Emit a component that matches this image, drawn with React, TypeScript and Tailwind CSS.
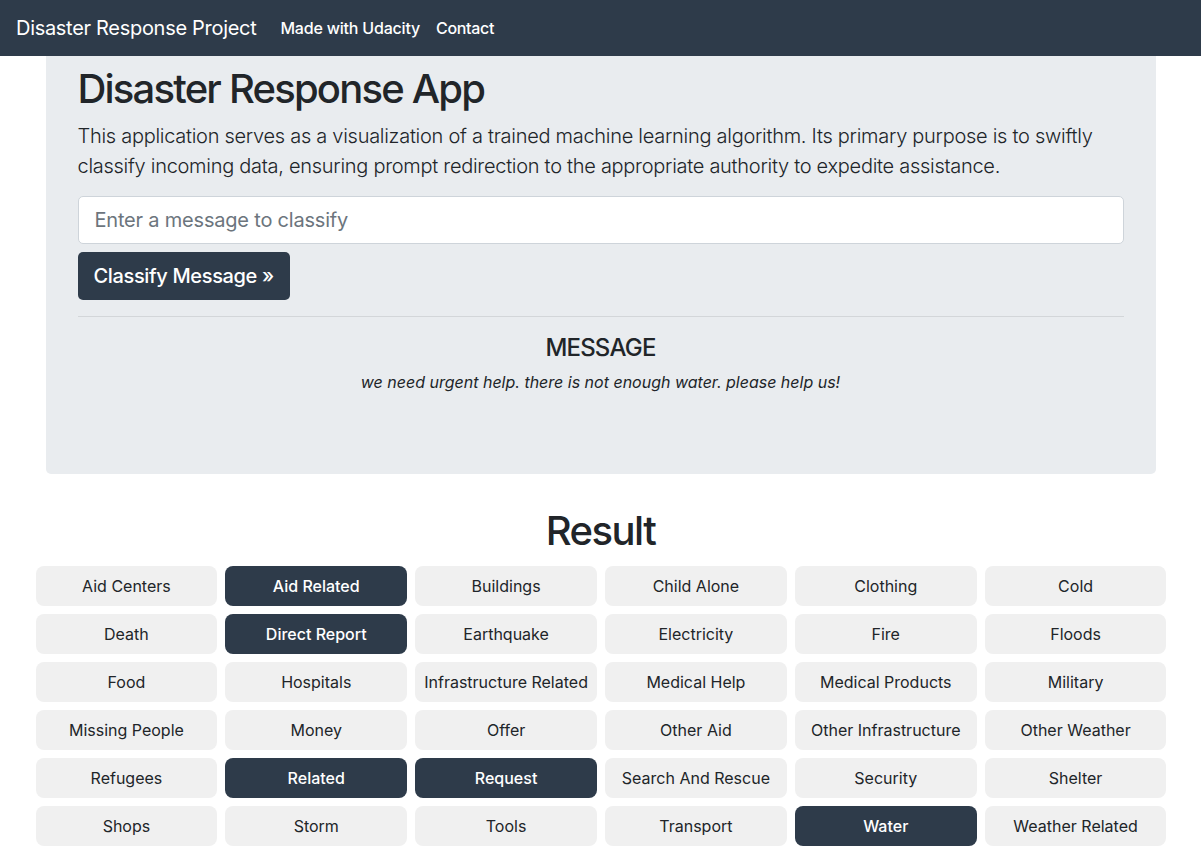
import React from "react";

const cats: [string, boolean][] = [
  ["Aid Centers", false], ["Aid Related", true], ["Buildings", false], ["Child Alone", false], ["Clothing", false], ["Cold", false],
  ["Death", false], ["Direct Report", true], ["Earthquake", false], ["Electricity", false], ["Fire", false], ["Floods", false],
  ["Food", false], ["Hospitals", false], ["Infrastructure Related", false], ["Medical Help", false], ["Medical Products", false], ["Military", false],
  ["Missing People", false], ["Money", false], ["Offer", false], ["Other Aid", false], ["Other Infrastructure", false], ["Other Weather", false],
  ["Refugees", false], ["Related", true], ["Request", true], ["Search And Rescue", false], ["Security", false], ["Shelter", false],
  ["Shops", false], ["Storm", false], ["Tools", false], ["Transport", false], ["Water", true], ["Weather Related", false],
];

export default function App() {
  return (
    <div className="min-h-[849px] bg-white text-[#212529]" style={{ fontFamily: "Inter, 'Noto Sans', sans-serif" }}>
      <nav className="h-[56px] bg-[#2e3b4a] flex items-center px-4">
        <span className="text-white text-[20px] mr-4 tracking-[-0.3px]">Disaster Response Project</span>
        <span className="text-white text-[16px] font-medium px-2 tracking-[-0.2px]">Made with Udacity</span>
        <span className="text-white text-[16px] font-medium px-2 tracking-[-0.3px]">Contact</span>
      </nav>
      <div className="w-[1110px] mx-auto bg-[#e9ecef] rounded-b-[5px] px-8 pt-[9px] pb-[64px]">
        <h1 className="text-[40px] leading-[48px] font-medium mb-2 tracking-[-1.8px]">Disaster Response App</h1>
        <p className="text-[20px] leading-[30px] mb-[15px] font-light tracking-[-0.28px]">
          This application serves as a visualization of a trained machine learning algorithm. Its primary purpose is to swiftly classify incoming data, ensuring prompt redirection to the appropriate authority to expedite assistance.
        </p>
        <input
          className="block w-full h-[48px] bg-white border border-[#ced4da] rounded-[5px] px-4 text-[20px] tracking-[-0.2px] placeholder:text-[#6c757d] outline-none"
          placeholder="Enter a message to classify"
        />
        <button className="mt-2 h-[48px] px-4 bg-[#2e3b4a] text-white text-[20px] rounded-[5px] font-medium tracking-[-0.35px]">
          Classify Message »
        </button>
        <hr className="mt-4 mb-4 border-t border-[#d3d6d9]" />
        <h4 className="text-center text-[24px] leading-[29px] font-medium mb-2 tracking-[-0.8px]">MESSAGE</h4>
        <p className="text-center italic text-[16px] leading-[24px] mb-4">we need urgent help. there is not enough water. please help us!</p>
      </div>
      <h1 className="text-center text-[40px] leading-[48px] font-medium mt-[33px] mb-[11px] tracking-[-1.5px]">Result</h1>
      <div className="w-[1132px] mx-auto grid grid-cols-6 gap-2 pl-[1px]">
        {cats.map(([name, on]) => (
          <div
            key={name}
            className={
              on
                ? "h-[40px] rounded-[8px] bg-[#2e3b4a] text-white font-medium text-[16px] flex items-center justify-center"
                : "h-[40px] rounded-[8px] bg-[#f0f0f0] text-[#212529] text-[16px] flex items-center justify-center"
            }
          >
            {name}
          </div>
        ))}
      </div>
    </div>
  );
}
